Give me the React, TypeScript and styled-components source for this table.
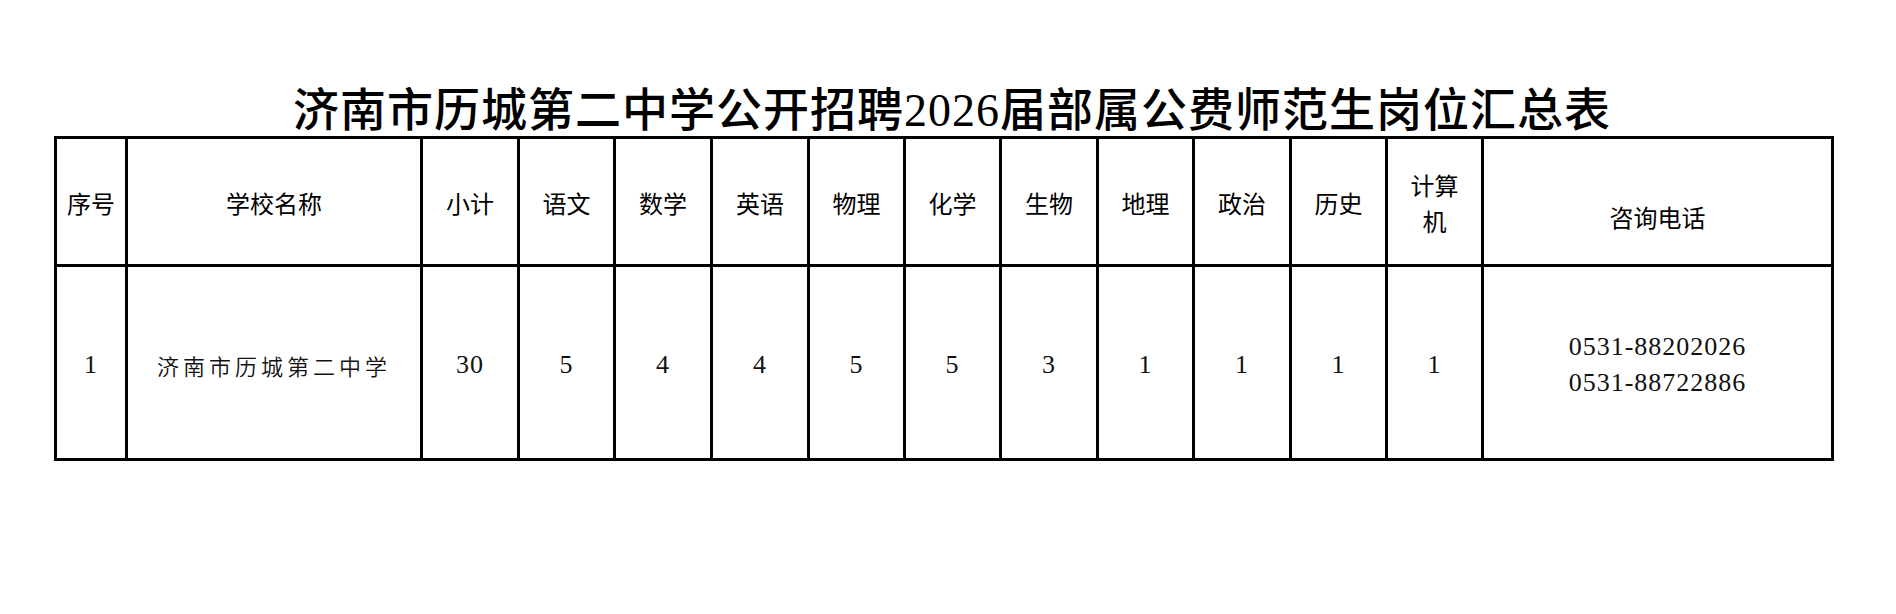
import React from "react";
import styled, { createGlobalStyle } from "styled-components";

const GlobalStyle = createGlobalStyle`
  html, body { margin: 0; padding: 0; background: #ffffff; }
  body { font-family: "Noto Sans CJK SC", "Noto Sans", sans-serif; color: #000; }
`;

const Page = styled.div`
  width: 1896px;
  height: 614px;
  padding-top: 86px;
  box-sizing: border-box;
  background: #fff;
`;

const Title = styled.h1`
  margin: 0;
  height: 50px;
  line-height: 50px;
  text-align: center;
  font-family: "Liberation Serif", "Noto Sans CJK SC", serif;
  font-size: 46px;
  font-weight: 500;
  letter-spacing: 1px;
  color: #000;
  padding-left: 8px;
`;

const Grid = styled.div`
  margin-left: 54px;
  width: 1780px;
  box-sizing: border-box;
  display: grid;
  grid-template-columns: 68px 292px 94px 93px 94px 94px 93px 93px 94px 93px 94px 93px 93px 347px;
  grid-template-rows: 125px 191px;
  gap: 3px;
  padding: 3px;
  background: #000;
`;

const HeadCell = styled.div<{ $low?: boolean }>`
  background: #fff;
  display: flex;
  align-items: center;
  justify-content: center;
  text-align: center;
  font-family: "Noto Sans CJK SC", sans-serif;
  font-size: 24px;
  font-weight: 400;
  line-height: 36px;
  color: #000;
  padding-top: ${(p) => (p.$low ? "30px" : "2px")};
  box-sizing: border-box;
`;

const Cell = styled.div<{ $cjk?: boolean }>`
  background: #fff;
  display: flex;
  flex-direction: column;
  align-items: center;
  justify-content: center;
  text-align: center;
  font-family: ${(p) =>
    p.$cjk ? `"Noto Sans CJK SC", sans-serif` : `"Liberation Serif", serif`};
  font-size: ${(p) => (p.$cjk ? "22px" : "26px")};
  font-weight: ${(p) => (p.$cjk ? 350 : 400)};
  letter-spacing: ${(p) => (p.$cjk ? "4px" : "1px")};
  line-height: 36px;
  padding-top: 4px;
  box-sizing: border-box;
  color: #111;
`;

const heads = ["小计", "语文", "数学", "英语", "物理", "化学", "生物", "地理", "政治", "历史"];
const counts = ["30", "5", "4", "4", "5", "5", "3", "1", "1", "1", "1"];

export default function App() {
  return (
    <Page>
      <GlobalStyle />
      <Title>济南市历城第二中学公开招聘2026届部属公费师范生岗位汇总表</Title>
      <Grid>
        <HeadCell>序号</HeadCell>
        <HeadCell>学校名称</HeadCell>
        {heads.map((h) => (
          <HeadCell key={h}>{h}</HeadCell>
        ))}
        <HeadCell>
          计算
          <br />
          机
        </HeadCell>
        <HeadCell $low>咨询电话</HeadCell>

        <Cell>1</Cell>
        <Cell $cjk>济南市历城第二中学</Cell>
        {counts.map((c, i) => (
          <Cell key={i}>{c}</Cell>
        ))}
        <Cell>
          <span>0531-88202026</span>
          <span>0531-88722886</span>
        </Cell>
      </Grid>
    </Page>
  );
}
